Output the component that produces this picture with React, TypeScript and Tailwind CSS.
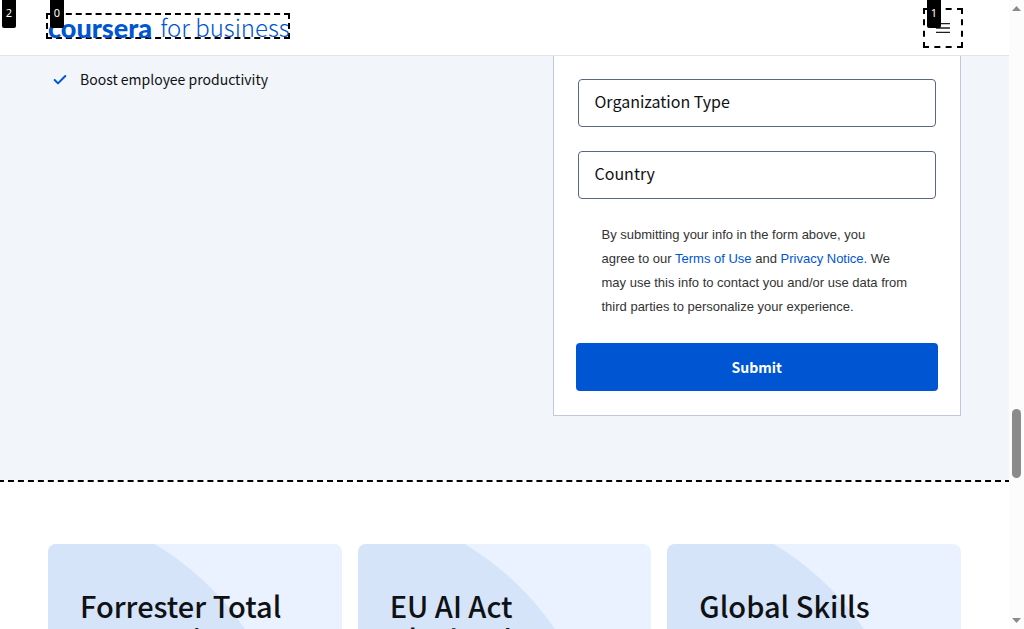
import { Check } from "lucide-react";

const sans = "font-['Noto_Sans_CJK_SC',sans-serif]";

const reports = [
  { title: "Forrester Total Economic Impact" },
  { title: "EU AI Act Playbook" },
  { title: "Global Skills Report" },
];

function Tag({ label, className }: { label: string; className: string }) {
  return (
    <span
      className={`absolute z-20 flex h-7 w-3.5 items-center justify-center rounded-b-xs bg-black pb-1 font-['Noto_Sans',sans-serif] text-[11px] leading-none text-white ${className}`}
    >
      {label}
    </span>
  );
}

function Header() {
  return (
    <header className="relative z-10 flex h-14 shrink-0 items-center justify-between border-b border-[#e1e3e8] bg-white px-[46px]">
      <Tag label="2" className="top-0 left-0.5" />
      <Tag label="0" className="top-0 left-[50px]" />
      <a
        href="#home"
        aria-label="Coursera for business"
        className="mb-[3px] flex h-[26px] w-[244px] items-center gap-2 border-2 border-dashed border-black pt-0.5 whitespace-nowrap text-[#0056d2]"
      >
        <span className="font-['Lato',sans-serif] text-[27px] leading-none font-black">coursera</span>
        <span className="font-['Noto_Sans_CJK_SC',sans-serif] text-[24px] leading-none font-light">for business</span>
      </a>
      <Tag label="1" className="top-0 right-[68px]" />
      <button
        type="button"
        aria-label="Menu"
        className="flex size-10 items-center justify-center border-2 border-dashed border-black text-[#1f1f1f]"
      >
        <svg width="14" height="10" viewBox="0 0 14 10" stroke="currentColor" aria-hidden="true">
          <path d="M0 .5h14M0 9.5h14" strokeWidth="1.4" />
          <path d="M0 5h14" strokeWidth="2" strokeOpacity=".75" />
        </svg>
      </button>
    </header>
  );
}

function Field({ id, label }: { id: string; label: string }) {
  return (
    <select
      id={id}
      aria-label={label}
      className="h-12 w-full appearance-none rounded border border-[#5b6780] bg-white px-4 pb-1 text-base text-[#0f1114]"
    >
      <option>{label}</option>
    </select>
  );
}

function ContactSection() {
  return (
    <section className="grid shrink-0 grid-cols-2 gap-24 bg-[#f2f5fa] px-12 pb-16">
      <ul className="pt-[11px]">
        <li className="flex items-center gap-3 pl-1 text-sm leading-6 text-[#0f1114]">
          <Check size={16} strokeWidth={3} className="mt-0.5 text-[#0056d2]" />
          Boost employee productivity
        </li>
      </ul>
      <form className="border border-t-0 border-[#bfc8dc] bg-white px-[22px] pt-[23px] pb-6">
        <div className="flex flex-col gap-6 px-0.5">
          <Field id="org" label="Organization Type" />
          <Field id="country" label="Country" />
        </div>
        <p className="px-[26px] py-6 font-['Liberation_Sans',sans-serif] text-[13px] leading-6 text-[#333333]">
          By submitting your info in the form above, you
          <br />
          agree to our{" "}
          <a href="#terms" className="text-[#0056d2]">Terms of Use</a> and{" "}
          <a href="#privacy" className="text-[#0056d2]">Privacy Notice.</a> We may use this info to
          contact you and/or use data from third parties to personalize your experience.
        </p>
        <button type="button" className="h-12 w-full rounded bg-[#0056d2] text-sm font-bold text-white">
          Submit
        </button>
      </form>
    </section>
  );
}

function Reports() {
  return (
    <section className="-mx-0.5 grid shrink-0 grid-cols-3 gap-4 border-2 border-dashed border-black bg-white px-12 py-[62px]">
      {reports.map(({ title }) => (
        <article key={title} className="relative h-80 overflow-hidden rounded-lg bg-[#eaf2ff] px-8 pt-[45px]">
          <svg className="absolute top-0 left-0 h-full w-full" aria-hidden="true">
            <circle cx="-39" cy="245" r="285" fill="#d6e4fa" />
          </svg>
          <h2 className="relative w-52 text-[29px] leading-[33px] font-medium text-[#0f1114]">{title}</h2>
        </article>
      ))}
    </section>
  );
}

function ScrollTrack() {
  return (
    <div aria-hidden="true" className="flex w-[15px] shrink-0 flex-col items-center bg-[#fcfcfc] py-1.5">
      <svg width="9" height="5" viewBox="0 0 9 5">
        <path d="M0 5 4.5 0 9 5Z" fill="#8b8b8b" />
      </svg>
      <div className="flex-[397]" />
      <div className="h-[69px] w-[9px] rounded-full bg-[#8b8b8b]" />
      <div className="flex-[139]" />
      <svg width="9" height="5" viewBox="0 0 9 5">
        <path d="M0 0 4.5 5 9 0Z" fill="#8b8b8b" />
      </svg>
    </div>
  );
}

export default function App() {
  return (
    <div className={`flex h-screen overflow-hidden bg-white ${sans}`}>
      <div className="flex min-w-0 flex-1 flex-col overflow-hidden">
        <Header />
        <main className="flex flex-col">
          <ContactSection />
          <Reports />
        </main>
      </div>
      <ScrollTrack />
    </div>
  );
}
